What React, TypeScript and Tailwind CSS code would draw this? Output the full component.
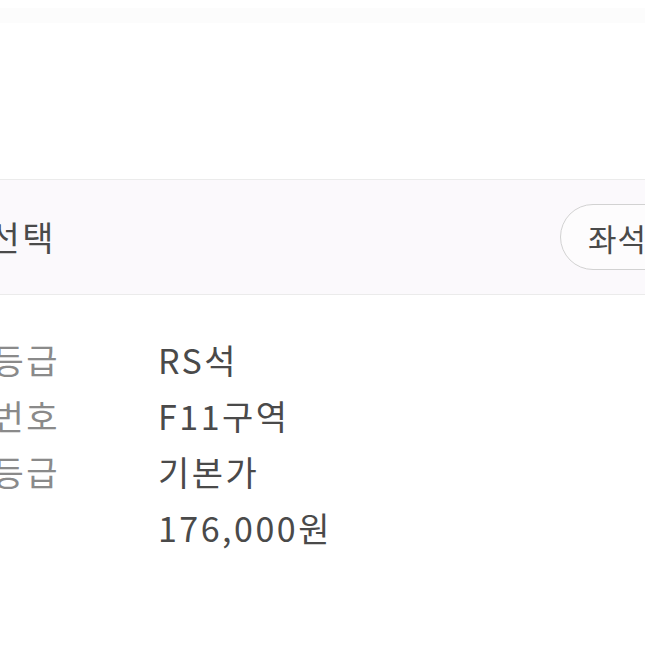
export default function App() {
  const rows = [
    { label: "좌석등급", value: "RS석" },
    { label: "구역번호", value: "F11구역" },
    { label: "가격등급", value: "기본가" },
    { label: "가격", value: "176,000원" },
  ];

  return (
    <div
      className="h-[645px] w-[645px] overflow-hidden bg-white text-[#4a4a4a]"
      style={{ fontFamily: '"Noto Sans CJK KR", "Noto Sans", sans-serif' }}
    >
      <div className="mt-[8px] h-[15px] bg-[#fcfcfc]" />

      <div className="mt-[156px] flex h-[116px] items-center border-y border-[#ebebeb] bg-[#fbf9fc]">
        <div className="flex w-[560px] shrink-0 items-center">
          <h2 className="ml-[-146px] w-[202px] shrink-0 text-right text-[34px] leading-none tracking-[2.5px] text-[#4a4a4a]">
            좌석선택
          </h2>
        </div>
        <button className="flex h-[66px] shrink-0 items-center rounded-full border border-[#d2d2d2] bg-[#fdfcfd] pl-[27px] pr-[30px] text-[31px] leading-none tracking-[1px] text-[#4a4a4a]">
          좌석배치도
        </button>
      </div>

      <dl className="mt-[36px] flex flex-col">
        {rows.map((r) => (
          <div key={r.label} className="flex h-[56px] items-center text-[34px] tracking-[2.5px]">
            <dt className="ml-[-75px] w-[146px] shrink-0 whitespace-nowrap text-left text-[#8a8a8a]">{r.label}</dt>
            <dd className="ml-[87px] whitespace-nowrap text-[#4a4a4a]">{r.value}</dd>
          </div>
        ))}
      </dl>
    </div>
  );
}
